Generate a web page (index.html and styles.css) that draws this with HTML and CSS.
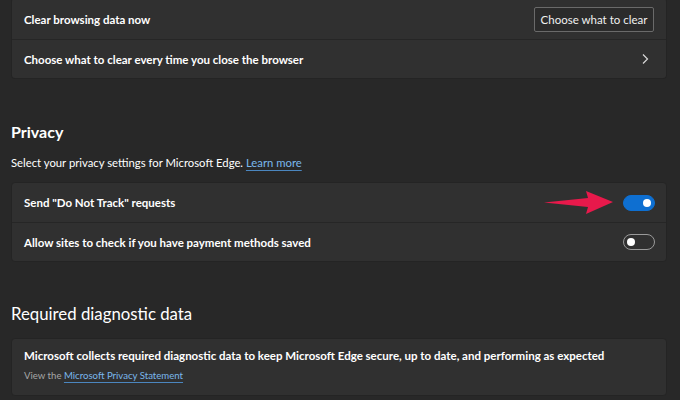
FILE: index.html
```html
<!DOCTYPE html>
<html>
<head>
<meta charset="utf-8">
<link rel="stylesheet" href="styles.css">
</head>
<body>
<div class="page">
  <div class="card card-top">
    <div class="row">
      <span class="label">Clear browsing data now</span>
      <button class="btn">Choose what to clear</button>
    </div>
    <div class="row">
      <span class="label">Choose what to clear every time you close the browser</span>
      <svg class="chev" width="10" height="12" viewBox="0 0 10 12"><path d="M3 1.5 L7.5 6 L3 10.5" fill="none" stroke="#d8d8d8" stroke-width="1.2"/></svg>
    </div>
  </div>

  <h2 class="heading privacy">Privacy</h2>
  <p class="sub">Select your privacy settings for Microsoft Edge. <a class="link">Learn more</a></p>
  <div class="card">
    <div class="row">
      <span class="label">Send "Do Not Track" requests</span>
      <span class="toggle on"><span class="knob"></span></span>
      <svg class="arrow" width="74" height="28" viewBox="0 0 74 28"><polygon points="1,13.5 45,9 43,2 70,13 43,25 45,18" fill="#e8194b"/></svg>
    </div>
    <div class="row">
      <span class="label">Allow sites to check if you have payment methods saved</span>
      <span class="toggle"><span class="knob"></span></span>
    </div>
  </div>

  <h2 class="heading diag">Required diagnostic data</h2>
  <div class="card card-diag">
    <p class="diag-text">Microsoft collects required diagnostic data to keep Microsoft Edge secure, up to date, and performing as expected</p>
    <p class="diag-sub">View the <a class="link">Microsoft Privacy Statement</a></p>
  </div>
</div>
</body>
</html>
```

FILE: styles.css
```css
html, body {
  margin: 0;
  padding: 0;
  background: #282828;
  font-family: "Lato", "Open Sans", sans-serif;
  color: #ffffff;
  overflow: hidden;
}
.page {
  width: 656px;
  margin-left: 11px;
}
.card {
  background: #303030;
  border: 1px solid #242424;
  border-radius: 4px;
  box-sizing: border-box;
}
.card-top {
  margin-top: -2px;
  border-top: none;
}
.row {
  position: relative;
  height: 39px;
  display: flex;
  align-items: center;
  justify-content: space-between;
  padding: 0 12px 0 12px;
  box-sizing: border-box;
}
.row + .row {
  border-top: 1px solid #262626;
  height: 39px;
}
.card-top .row:first-child {
  height: 41px;
  padding-top: 2px;
}
.label {
  font-size: 11.5px;
  font-weight: 700;
  color: #ffffff;
}
.btn {
  font-family: inherit;
  font-size: 11.5px;
  color: #f0f0f0;
  background: #2b2b2b;
  border: 1px solid #6a6a6a;
  border-radius: 2px;
  height: 25px;
  width: 120px;
  padding: 0;
  margin-right: 0;
}
.chev {
  margin-right: 4px;
}
.heading {
  margin: 0;
  font-size: 16.8px;
  line-height: 28px;
  color: #ffffff;
}
.privacy {
  font-weight: 700;
  font-size: 16px;
  margin-top: 39px;
}
.sub {
  margin: 7px 0 0 0;
  font-size: 11.3px;
  line-height: 20px;
  color: #ffffff;
}
.link {
  color: #7ab7ec;
  text-decoration: underline;
  text-decoration-color: #4b86bf;
  text-underline-offset: 3px;
}
.sub + .card {
  margin-top: 9px;
}
.toggle {
  position: relative;
  width: 32px;
  height: 16px;
  border-radius: 8px;
  border: 1px solid #9a9a9a;
  box-sizing: border-box;
  margin-right: -1px;
}
.toggle .knob {
  position: absolute;
  left: 3px;
  top: 3px;
  width: 8px;
  height: 8px;
  border-radius: 50%;
  background: #ffffff;
}
.toggle.on {
  background: #0e6fd1;
  border-color: #0e6fd1;
}
.toggle.on .knob {
  left: auto;
  right: 3px;
}
.arrow {
  position: absolute;
  left: 531px;
  top: 6px;
}
.diag {
  font-weight: 400;
  margin-top: 38px;
}
.card-diag {
  margin-top: 10px;
  padding: 8px 12px 10px 12px;
  height: 58px;
}
.diag-text {
  margin: 0;
  font-size: 11.5px;
  line-height: 18px;
  font-weight: 700;
}
.diag-sub {
  margin: 3px 0 0 0;
  font-size: 9.6px;
  line-height: 16px;
  color: #a6a6a6;
}
```
